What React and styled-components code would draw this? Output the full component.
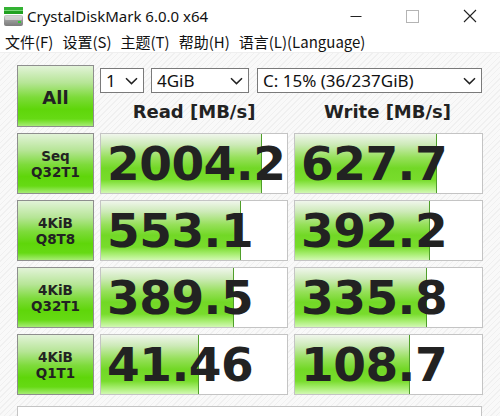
import React from "react";
import styled, { createGlobalStyle } from "styled-components";

const Global = createGlobalStyle`
  html, body { margin: 0; padding: 0; }
  body {
    width: 500px;
    height: 416px;
    overflow: hidden;
    background: #fff;
    font-family: "Noto Sans", "Noto Sans CJK SC", sans-serif;
    color: #1e1e1e;
  }
`;

const Window = styled.div`
  width: 500px;
  height: 416px;
  display: flex;
  flex-direction: column;
  overflow: hidden;
`;

const TitleBar = styled.div`
  height: 32px;
  display: flex;
  align-items: center;
  background: #fff;
  padding-left: 3px;
`;

const AppIcon = styled.svg`
  width: 21px;
  height: 21px;
  flex: none;
`;

const TitleText = styled.div`
  margin-left: 3px;
  font-size: 15px;
  color: #111;
  flex: 1;
  padding-bottom: 1px;
`;

const Controls = styled.div`
  display: flex;
  height: 32px;
  padding-right: 2px;
`;

const Ctrl = styled.div`
  width: 57px;
  display: flex;
  align-items: center;
  justify-content: center;
`;

const MenuBar = styled.div`
  height: 20px;
  display: flex;
  align-items: center;
  gap: 9px;
  padding-left: 5px;
  font-family: "Noto Sans CJK SC", "Noto Sans", sans-serif;
  font-size: 15px;
  color: #111;
  border-bottom: 1px solid #efefef;
  background: #fff;
`;

const MenuItem = styled.span`
  line-height: 20px;
`;

const Content = styled.div`
  flex: 1;
  padding: 12px 18px 0 17px;
  background-color: #f7f7f7;
  background-image: repeating-linear-gradient(
    135deg,
    #f9f9f9 0px,
    #f9f9f9 3px,
    #f0f0f0 3px,
    #f0f0f0 4px
  );
  display: flex;
  flex-direction: column;
`;

const Header = styled.div`
  display: flex;
  gap: 6px;
  height: 62px;
`;

const greenFace = `
  background: linear-gradient(
    to bottom,
    #e2f3d8 0%,
    #b6e596 28%,
    #7ddb3a 52%,
    #5fd60a 72%,
    #66da14 88%,
    #a6ec74 100%
  );
`;

const AllButton = styled.div`
  width: 77px;
  height: 62px;
  box-sizing: border-box;
  border: 1px solid #8e8e8e;
  ${greenFace}
  display: flex;
  align-items: center;
  justify-content: center;
  font-family: "DejaVu Sans", sans-serif;
  font-weight: bold;
  font-size: 18px;
  color: #222;
  padding-top: 2px;
`;

const HeaderRight = styled.div`
  flex: 1;
  display: flex;
  flex-direction: column;
  padding-top: 3px;
`;

const SelectRow = styled.div`
  display: flex;
  height: 25px;
`;

const Select = styled.div`
  width: ${(p) => p.$w}px;
  margin-right: ${(p) => p.$gap || 0}px;
  box-sizing: border-box;
  height: 25px;
  border: 1px solid #7a7a7a;
  background: #fff;
  display: flex;
  align-items: center;
  padding: 0 4px 0 5px;
  font-size: 17px;
  color: #111;
`;

const SelectText = styled.span`
  flex: 1;
  white-space: nowrap;
  overflow: hidden;
  line-height: 23px;
`;

const Chevron = styled.svg`
  width: 13px;
  height: 8px;
  flex: none;
  margin-right: ${(p) => p.$mr || 0}px;
`;

const Titles = styled.div`
  flex: 1;
  display: grid;
  grid-template-columns: 188px 189px;
  column-gap: 5px;
  align-items: center;
`;

const ColTitle = styled.div`
  text-align: center;
  font-family: "DejaVu Sans", sans-serif;
  font-weight: bold;
  font-size: 18px;
  color: #222;
  padding-top: 2px;
`;

const Grid = styled.div`
  margin-top: 6px;
  display: grid;
  grid-template-columns: 77px 188px 189px;
  grid-auto-rows: 61px;
  column-gap: 6px;
  row-gap: 6px;
`;

const Label = styled.div`
  box-sizing: border-box;
  border: 1px solid #8e8e8e;
  ${greenFace}
  display: flex;
  flex-direction: column;
  align-items: center;
  justify-content: center;
  font-family: "DejaVu Sans", sans-serif;
  font-weight: bold;
  font-size: 13.5px;
  line-height: 16px;
  color: #222;
`;

const Cell = styled.div`
  position: relative;
  box-sizing: border-box;
  border: 1px solid #c4c4c4;
  background: #fff;
  overflow: hidden;
  margin-left: ${(p) => (p.$write ? -1 : 0)}px;
`;

const Bar = styled.div`
  position: absolute;
  left: 0;
  top: 0;
  bottom: 0;
  background: linear-gradient(
    to bottom,
    #f0f6ec 0%,
    #cdeab8 18%,
    #96e05a 40%,
    #72d826 58%,
    #78dc2c 78%,
    #a8ee72 90%,
    #d2f8b4 100%
  );
  border-right: 1px solid #4f9e2a;
`;

const Value = styled.div`
  position: relative;
  height: 100%;
  display: flex;
  align-items: center;
  padding-left: 6px;
  font-family: "DejaVu Sans", sans-serif;
  font-weight: bold;
  font-size: 47px;
  letter-spacing: -0.5px;
  color: #222;
  white-space: nowrap;
  padding-bottom: 1px;
  box-sizing: border-box;
`;

const Comment = styled.div`
  margin-top: 11px;
  height: 30px;
  border: 1px solid #c4c4c4;
  background: #fff;
`;

const rows = [
  { l1: "Seq", l2: "Q32T1", read: "2004.2", rw: 160, write: "627.7", ww: 141 },
  { l1: "4KiB", l2: "Q8T8", read: "553.1", rw: 139, write: "392.2", ww: 134 },
  { l1: "4KiB", l2: "Q32T1", read: "389.5", rw: 132, write: "335.8", ww: 131 },
  { l1: "4KiB", l2: "Q1T1", read: "41.46", rw: 97, write: "108.7", ww: 114 },
];

const Down = ({ mr }) => (
  <Chevron viewBox="0 0 13 8" $mr={mr}>
    <path d="M1 1.2 L6.5 6.6 L12 1.2" fill="none" stroke="#222" strokeWidth="1.5" />
  </Chevron>
);

export default function App() {
  return (
    <Window>
      <Global />
      <TitleBar>
        <AppIcon viewBox="0 0 21 21">
          <defs>
            <linearGradient id="body" x1="0" y1="0" x2="0" y2="1">
              <stop offset="0" stopColor="#c9c9c9" />
              <stop offset="0.5" stopColor="#9a9a9a" />
              <stop offset="1" stopColor="#7b7b7b" />
            </linearGradient>
          </defs>
          <rect x="1" y="1" width="19" height="3" fill="#33b233" />
          <rect x="1" y="4" width="19" height="1" fill="#7ad67a" />
          <rect x="1" y="5" width="19" height="3" fill="#21a121" />
          <rect x="1" y="9" width="19" height="11" rx="2" fill="url(#body)" />
          <rect x="2" y="10" width="17" height="4" rx="1" fill="#dcdcdc" opacity="0.7" />
          <rect x="15" y="15" width="3" height="2" fill="#33cc33" />
        </AppIcon>
        <TitleText>CrystalDiskMark 6.0.0 x64</TitleText>
        <Controls>
          <Ctrl>
            <svg width="12" height="12" viewBox="0 0 12 12">
              <path d="M0.5 6.5 H11.5" stroke="#222" strokeWidth="1" />
            </svg>
          </Ctrl>
          <Ctrl>
            <svg width="13" height="13" viewBox="0 0 13 13">
              <rect x="0.5" y="0.5" width="12" height="12" fill="none" stroke="#b4b4b4" strokeWidth="1" />
            </svg>
          </Ctrl>
          <Ctrl>
            <svg width="14" height="14" viewBox="0 0 14 14">
              <path d="M1 1 L13 13 M13 1 L1 13" stroke="#222" strokeWidth="1.1" />
            </svg>
          </Ctrl>
        </Controls>
      </TitleBar>
      <MenuBar>
        <MenuItem>文件(F)</MenuItem>
        <MenuItem>设置(S)</MenuItem>
        <MenuItem>主题(T)</MenuItem>
        <MenuItem>帮助(H)</MenuItem>
        <MenuItem>语言(L)(Language)</MenuItem>
      </MenuBar>
      <Content>
        <Header>
          <AllButton>All</AllButton>
          <HeaderRight>
            <SelectRow>
              <Select $w={44} $gap={7}>
                <SelectText>1</SelectText>
                <Down mr={1} />
              </Select>
              <Select $w={98} $gap={8}>
                <SelectText>4GiB</SelectText>
                <Down mr={1} />
              </Select>
              <Select $w={225}>
                <SelectText>C: 15% (36/237GiB)</SelectText>
                <Down mr={1} />
              </Select>
            </SelectRow>
            <Titles>
              <ColTitle>Read [MB/s]</ColTitle>
              <ColTitle>Write [MB/s]</ColTitle>
            </Titles>
          </HeaderRight>
        </Header>
        <Grid>
          {rows.map((r, i) => (
            <React.Fragment key={i}>
              <Label>
                <span>{r.l1}</span>
                <span>{r.l2}</span>
              </Label>
              <Cell>
                <Bar style={{ width: r.rw }} />
                <Value>{r.read}</Value>
              </Cell>
              <Cell>
                <Bar style={{ width: r.ww }} />
                <Value>{r.write}</Value>
              </Cell>
            </React.Fragment>
          ))}
        </Grid>
        <Comment />
      </Content>
    </Window>
  );
}
